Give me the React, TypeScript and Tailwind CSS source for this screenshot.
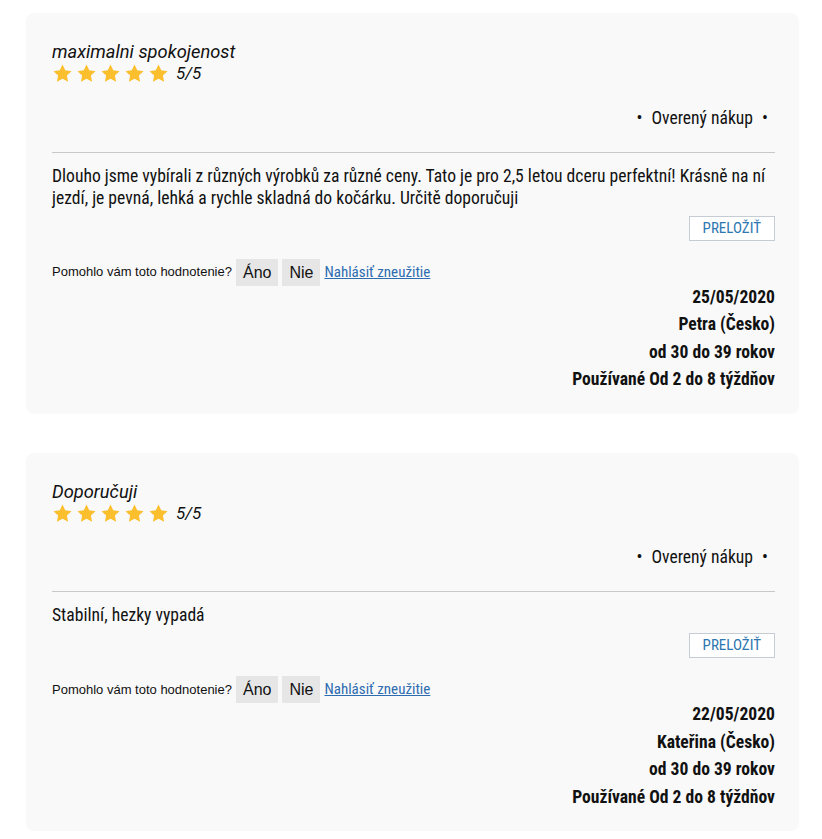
const cond = "font-['Roboto_Condensed','Liberation_Sans_Narrow','DejaVu_Sans_Condensed',Roboto,sans-serif]";

type Review = {
  title: string;
  text: string;
  date: string;
  author: string;
  age: string;
  usage: string;
};

const reviews: Review[] = [
  {
    title: "maximalni spokojenost",
    text: "Dlouho jsme vybírali z různých výrobků za různé ceny. Tato je pro 2,5 letou dceru perfektní! Krásně na ní jezdí, je pevná, lehká a rychle skladná do kočárku. Určitě doporučuji",
    date: "25/05/2020",
    author: "Petra (Česko)",
    age: "od 30 do 39 rokov",
    usage: "Používané Od 2 do 8 týždňov",
  },
  {
    title: "Doporučuji",
    text: "Stabilní, hezky vypadá",
    date: "22/05/2020",
    author: "Kateřina (Česko)",
    age: "od 30 do 39 rokov",
    usage: "Používané Od 2 do 8 týždňov",
  },
];

function Star() {
  return (
    <svg viewBox="0 0 24 24" className="w-[21px] h-[21px] mr-[3px]" fill="#fbbf2e">
      <path d="M12 1.8l3.1 6.6 7.2.9-5.3 5 1.4 7.2L12 18l-6.4 3.5 1.4-7.2-5.3-5 7.2-.9z" />
    </svg>
  );
}

function ReviewCard({ r }: { r: Review }) {
  return (
    <div className={`bg-[#f9f9f9] rounded-lg pl-[26px] pr-[24px] pt-[28px] pb-[20px] text-[#111] ${cond}`}>
      <div className="text-[18.3px] italic leading-[22px] font-['Roboto',sans-serif]">{r.title}</div>
      <div className="flex items-center mt-[-2px]">
        {[0, 1, 2, 3, 4].map((i) => (
          <Star key={i} />
        ))}
        <span className="ml-[4px] text-[17px] italic font-['Roboto',sans-serif]">5/5</span>
      </div>
      <div className="flex justify-end items-center mt-[21px] text-[17.6px] leading-[20px] pr-[7px]">
        <span className="mr-[9px]">•</span>
        <span>Overený nákup</span>
        <span className="ml-[9px]">•</span>
      </div>
      <div className="border-t border-[#c8c8c8] mt-[24px]" />
      <p className="mt-[12px] text-[17.6px] leading-[22px]">{r.text}</p>
      <div className="flex justify-end mt-[7px]">
        <button className="bg-white border border-[#c5ccd3] px-[13px] h-[25px] text-[15px] text-[#2d76b0] uppercase">
          Preložiť
        </button>
      </div>
      <div className="flex items-center mt-[18px] text-[13px]">
        <span className="font-['Liberation_Sans',Arial,sans-serif] mr-[4px]">Pomohlo vám toto hodnotenie?</span>
        <span className="bg-[#e6e6e6] px-[7px] h-[27px] leading-[27px] text-[16px] font-['Liberation_Sans',Arial,sans-serif]">Áno</span>
        <span className="ml-[4px] bg-[#e6e6e6] px-[7px] h-[27px] leading-[27px] text-[16px] font-['Liberation_Sans',Arial,sans-serif]">Nie</span>
        <a href="#" className="ml-[4px] text-[15px] text-[#2d6cb0] underline">Nahlásiť zneužitie</a>
      </div>
      <div className="flex flex-col items-end font-bold text-[17.6px] leading-[27.5px] mt-[-2px]">
        <span>{r.date}</span>
        <span>{r.author}</span>
        <span>{r.age}</span>
        <span>{r.usage}</span>
      </div>
    </div>
  );
}

export default function App() {
  return (
    <div className="bg-white min-h-screen px-[26px] pt-[13px] pr-[23px] flex flex-col gap-[39px]">
      {reviews.map((r, i) => (
        <ReviewCard key={i} r={r} />
      ))}
    </div>
  );
}
